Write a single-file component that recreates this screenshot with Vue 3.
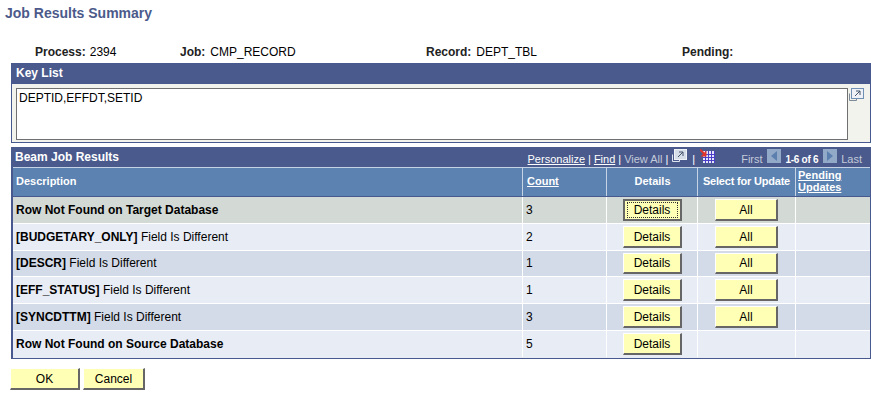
<script setup>
const rows = [
  { tone: 'focus', bold: 'Row Not Found on Target Database', rest: '', count: 3, all: true, focus: true },
  { tone: 'even', bold: '[BUDGETARY_ONLY]', rest: ' Field Is Different', count: 2, all: true },
  { tone: 'odd short', bold: '[DESCR]', rest: ' Field Is Different', count: 1, all: true },
  { tone: 'even', bold: '[EFF_STATUS]', rest: ' Field Is Different', count: 1, all: true },
  { tone: 'odd', bold: '[SYNCDTTM]', rest: ' Field Is Different', count: 3, all: true },
  { tone: 'even', bold: 'Row Not Found on Source Database', rest: '', count: 5, all: false },
]
const info = [
  { label: 'Process:', value: '2394', w: 'w1' },
  { label: 'Job:', value: 'CMP_RECORD', w: 'w2' },
  { label: 'Record:', value: 'DEPT_TBL', w: 'w3' },
  { label: 'Pending:', value: '', w: 'w4' },
]
</script>

<template>
  <div class="page">
    <h1 class="title">Job Results Summary</h1>

    <div class="info">
      <div v-for="i in info" :key="i.label" class="info-item" :class="i.w">
        <b>{{ i.label }}</b><span>{{ i.value }}</span>
      </div>
    </div>

    <section class="keylist">
      <div class="keyhead">Key List</div>
      <div class="keybody">
        <div class="keybox">DEPTID,EFFDT,SETID</div>
        <svg class="expand" width="15" height="14" viewBox="0 0 15 14">
          <path d="M0.500 5.500v7h7v-2" fill="none" stroke="#7f8a99" />
          <rect x="2.500" y="0.500" width="12" height="10" fill="#eef2f7" stroke="#6f8fb5" />
          <path d="M6 8l5-5M7 3h4v4" fill="none" stroke="#44546a" />
        </svg>
      </div>
    </section>

    <section class="results">
      <div class="reshead">
        <span class="restitle">Beam Job Results</span>
        <div class="nav">
          <a>Personalize</a><span class="sep">|</span><a>Find</a><span class="sep">|</span><span class="dim">View All</span><span class="sep">|</span>
          <svg class="navicon win-icon" width="15" height="14" viewBox="0 0 15 14">
            <path d="M0.500 5.500v7h7v-2" fill="none" stroke="#dfe5ef" />
            <rect x="2.500" y="0.500" width="12" height="10" fill="#d5dde9" stroke="#eef2f7" />
            <path d="M6 8l5-5M7 3h4v4" fill="none" stroke="#44546a" />
          </svg>
          <span class="sep">|</span>
          <svg class="navicon grid-icon" width="15" height="14" viewBox="0 0 15 14">
            <rect x="3" y="2" width="12" height="12" fill="#e6e6fb" />
            <path d="M3 5.500h12M3 8.500h12M3 11.500h12M5.500 2v12M8.500 2v12M11.500 2v12M14.500 2v12" stroke="#4a3fc8" />
            <path d="M0 0.500l4.500 4.500" stroke="#e0352b" stroke-width="2" />
            <path d="M6.500 1.500v6h-6z" fill="#e0352b" />
          </svg>
          <span class="dim first">First</span>
          <span class="arrow"><i class="tri left"></i></span>
          <b class="pos">1-6 of 6</b>
          <span class="arrow"><i class="tri right"></i></span>
          <span class="dim last">Last</span>
        </div>
      </div>

      <div class="row colhead">
        <div class="cell left"><b>Description</b></div>
        <div class="cell left count"><a>Count</a></div>
        <div class="cell center nudge"><b>Details</b></div>
        <div class="cell center"><b class="select">Select for Update</b></div>
        <div class="cell left tight"><a>Pending Updates</a></div>
      </div>

      <div v-for="r in rows" :key="r.bold" class="row datarow" :class="r.tone">
        <div class="cell left"><b>{{ r.bold }}</b>{{ r.rest }}</div>
        <div class="cell left">{{ r.count }}</div>
        <div class="cell center">
          <button class="btn details" :class="{ focused: r.focus }"><span>Details</span></button>
        </div>
        <div class="cell center"><button v-if="r.all" class="btn allbtn"><span>All</span></button></div>
        <div class="cell"></div>
      </div>
    </section>

    <div class="actions">
      <button class="btn ok"><span>OK</span></button>
      <button class="btn cancel"><span>Cancel</span></button>
    </div>
  </div>
</template>

<style>
html, body { margin: 0; background: #fff; overflow: hidden; }
</style>

<style scoped>
.page {
  width: 871px;
  height: 405px;
  box-sizing: border-box;
  padding-top: 5px;
  font-family: "Liberation Sans", Arial, sans-serif;
  font-size: 12px;
  color: #000;
  overflow: hidden;
}
.title {
  margin: 0 0 0 5px;
  height: 16px;
  line-height: 16px;
  font-size: 14px;
  font-weight: bold;
  color: #4b5a8a;
}
.info {
  display: flex;
  margin-top: 25px;
  padding-left: 35px;
  height: 13px;
  line-height: 13px;
  color: #000;
}
.info-item { display: flex; gap: 5px; }
.info-item b { color: #222; }
.w1 { width: 145px; gap: 4px; }
.w2 { width: 246px; }
.w3 { width: 256px; }

.keylist {
  margin: 4px 0 0 11px;
  width: 860px;
  height: 80px;
  box-sizing: border-box;
  border: 1px solid #47598f;
  background: #f1f3ec;
}
.keyhead {
  height: 19px;
  line-height: 18px;
  padding-left: 4px;
  background: #4a5a8c;
  border-bottom: 1px solid #47598f;
  color: #fff;
  font-weight: bold;
}
.keybody {
  display: flex;
  align-items: flex-start;
  padding: 3px 0 0 4px;
}
.keybox {
  width: 832px;
  height: 52px;
  box-sizing: border-box;
  border: 1px solid #707070;
  background: #fff;
  padding: 3px 2px;
  line-height: 13px;
  margin-top: 1px;
}
.expand { margin: 1px 0 0 1px; }

.results {
  margin: 4px 0 0 11px;
  width: 860px;
  box-sizing: border-box;
  border-left: 2px solid #47598f;
  border-right: 1px solid #47598f;
  border-bottom: 1px solid #47598f;
}
.reshead {
  margin-left: -2px;
  margin-right: -1px;
  height: 20px;
  display: flex;
  justify-content: space-between;
  align-items: flex-start;
  background: #4a5a8c;
  color: #fff;
}
.restitle {
  font-weight: bold;
  line-height: 20px;
  padding-left: 4px;
}
.nav {
  display: flex;
  align-items: flex-end;
  height: 20px;
  box-sizing: border-box;
  font-size: 11px;
  line-height: 13px;
  padding: 0 9px 1px 0;
  color: #fff;
}
.nav a { text-decoration: underline; }
.sep { margin: 0 3px; font-size: 11px; }
.dim { color: #c3cada; }
.navicon { margin-bottom: 3px; }
.win-icon { margin: 0 2px 3px 1px; }
.grid-icon { margin-left: 2px; }
.first { margin-left: 26px; }
.last { margin-left: 4px; }
.pos { margin: 0 1px 0 5px; font-size: 10px; letter-spacing: -0.3px; }
.arrow {
  width: 14px;
  height: 14px;
  display: flex;
  align-items: center;
  justify-content: center;
  background: #93a9c8;
  margin: 0 0 3px 4px;
}
.tri { width: 0; height: 0; border-top: 5px solid transparent; border-bottom: 5px solid transparent; }
.tri.left { border-right: 6px solid #5b7fae; }
.tri.right { border-left: 6px solid #5b7fae; }

.row {
  display: grid;
  grid-template-columns: 509px 84px 91px 98px 1fr;
}
.colhead {
  height: 30px;
  background: #5b82b0;
  border-top: 1px solid #c5d3e4;
  border-bottom: 1px solid #47598f;
  box-sizing: border-box;
  color: #fff;
  font-size: 11px;
}
.colhead .cell { border-left: 1px solid #c5d3e4; padding-bottom: 2px; }
.colhead .cell:first-child { border-left: 0; }
.colhead a { font-weight: bold; text-decoration: underline; line-height: 12px; }
.select { letter-spacing: -0.2px; }
.cell {
  display: flex;
  align-items: center;
  box-sizing: border-box;
  border-left: 1px solid #fff;
  min-width: 0;
}
.cell:first-child { border-left: 0; }
.cell.left { padding-left: 3px; display: block; align-self: center; }
.cell.center { justify-content: center; }
.colhead .cell { align-self: stretch; }
.colhead .cell.left { display: flex; align-items: center; }
.colhead .count { padding-left: 4px; }
.colhead .nudge { padding-left: 1px; }
.colhead .tight { padding-left: 2px; }
.tight a { display: block; }

.datarow { height: 27px; border-bottom: 1px solid #fff; box-sizing: border-box; }
.datarow.short { height: 26px; }
.datarow .cell { align-self: stretch; }
.datarow .cell.left { display: flex; align-items: center; white-space: pre; }
.datarow.short .cell.left { padding-bottom: 1px; }
.datarow:last-child { border-bottom-color: transparent; }
.focus { background: #d3d9d5; }
.even { background: #e8ecf5; }
.odd { background: #d4dbe8; }

.btn {
  box-sizing: border-box;
  height: 22px;
  padding: 0;
  background: #ffffb5;
  border: 1px solid;
  border-color: #fff #666 #666 #fff;
  border-right-width: 2px;
  border-bottom-width: 2px;
  font: 12px "Liberation Sans", Arial, sans-serif;
  color: #000;
  display: flex;
  align-items: center;
  justify-content: center;
}
.short .btn { height: 21px; }
.details { width: 59px; padding-left: 1px; }
.allbtn { width: 63px; }
.focused { border: 2px solid #666; padding-left: 0; }
.focused span {
  box-sizing: border-box;
  width: 51px;
  height: 16px;
  border: 1px dotted #333;
  line-height: 14px;
  text-align: center;
}
.actions {
  display: flex;
  gap: 3px;
  margin: 9px 0 0 10px;
}
.ok { width: 70px; }
.cancel { width: 62px; }
</style>
